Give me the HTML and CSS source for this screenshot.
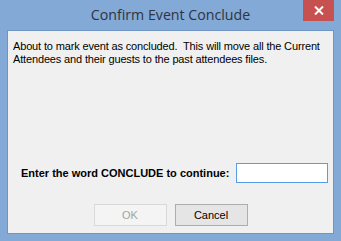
FILE: index.html
```html
<!DOCTYPE html>
<html lang="en">
<head>
  <meta charset="UTF-8">
  <title>Confirm Event Conclude</title>
  <link rel="stylesheet" href="styles.css">
</head>
<body>
  <!-- Dialog window frame -->
  <div class="window">
    <div class="titlebar">
      <span class="title">Confirm Event Conclude</span>
      <button class="close" aria-label="Close">
        <svg width="10" height="9" viewBox="0 0 10 9">
          <path d="M1 0.5 L9 8.5 M9 0.5 L1 8.5" stroke="#fff" stroke-width="2"/>
        </svg>
      </button>
    </div>

    <div class="client">
      <p class="message">About to mark event as concluded.&nbsp; This will move all the Current Attendees and their guests to the past attendees files.</p>

      <div class="confirm-row">
        <label for="word" class="confirm-label">Enter the word CONCLUDE to continue:</label>
        <input id="word" class="confirm-input" type="text">
      </div>

      <div class="buttons">
        <button class="btn" disabled>OK</button>
        <button class="btn">Cancel</button>
      </div>
    </div>
  </div>
</body>
</html>
```
FILE: styles.css
```css
/* Windows 8 style dialog */
body {
  margin: 0;
  font-family: "Liberation Sans", Arial, sans-serif;
}

.window {
  position: relative;
  width: 341px;
  height: 241px;
  background-color: #83a9d6;
  box-sizing: border-box;
  padding: 0 8px;
}

.titlebar {
  height: 30px;
  display: flex;
  align-items: center;
  justify-content: center;
}

.title {
  font-family: "Open Sans", "Noto Sans", sans-serif;
  font-size: 14.2px;
  color: #2e3440;
  margin-top: -1px;
}

.close {
  position: absolute;
  top: 0;
  right: 7px;
  width: 31px;
  height: 21px;
  padding: 0;
  border: none;
  background-color: #c75050;
  display: flex;
  align-items: center;
  justify-content: center;
}

.client {
  margin: 0 -1px;
  border: 1px solid #6f93c2;
  background-color: #f0f0f0;
  padding: 9px 0 0 0;
  height: 193px;
  font-size: 11px;
  color: #000;
}

.message {
  margin: 0;
  padding: 0 0 0 5px;
  line-height: 13px;
  letter-spacing: -0.15px;
}

.confirm-row {
  display: flex;
  align-items: center;
  margin-top: 97px;
  padding-left: 13px;
  height: 20px;
}

.confirm-label {
  font-weight: bold;
  margin-right: 3px;
}

.confirm-input {
  width: 92px;
  height: 20px;
  box-sizing: border-box;
  border: 1px solid #569de5;
  background-color: #fff;
  margin: 0 5px 0 auto;
  padding: 0 2px;
}

.buttons {
  display: flex;
  justify-content: center;
  gap: 8px;
  margin-top: 21px;
}

.btn {
  width: 73px;
  height: 22px;
  box-sizing: border-box;
  border: 1px solid #adadad;
  background-color: #e5e5e5;
  font-family: "Liberation Sans", Arial, sans-serif;
  font-size: 11px;
  color: #000;
  padding: 0;
}

.btn:disabled {
  border-color: #d9d9d9;
  background-color: #f4f4f4;
  color: #a3a3a3;
}
```
